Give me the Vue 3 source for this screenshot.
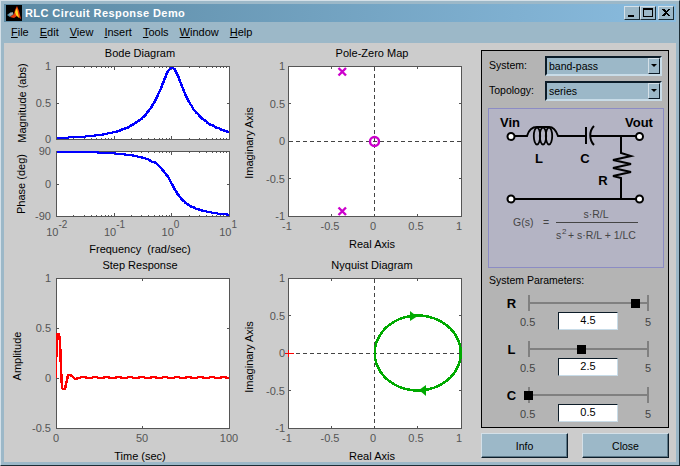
<script setup>
const FONT = 'Liberation Sans'
const freqLabel = 'Frequency  (rad/sec)'
const menus = [['F','ile'],['E','dit'],['V','iew'],['I','nsert'],['T','ools'],['W','indow'],['H','elp']]
const selects = [{ label: 'System:', value: 'band-pass' }, { label: 'Topology:', value: 'series' }]
const sliders = [
  { name: 'R', value: '4.5', pos: 88.4 },
  { name: 'L', value: '2.5', pos: 43.8 },
  { name: 'C', value: '0.5', pos: 0 }
]

const BX0 = 56.5, BX1 = 229.5
const logX = w => BX0 + (Math.log10(w) + 2) * (BX1 - BX0) / 3
const a = 0.9
function sample() {
  const out = []
  for (let i = 0; i <= 110; i++) out.push(Math.pow(10, -2 + 3 * i / 110))
  return out
}
const magLine = sample().map(w => {
  const m = a * w / Math.hypot(1 - w * w, a * w)
  return `${logX(w).toFixed(1)},${Math.round(138.5 - m * 71)}`
}).join(' ')
const phaseLine = sample().map(w => {
  const p = 90 - Math.atan2(a * w, 1 - w * w) * 180 / Math.PI
  return `${logX(w).toFixed(1)},${Math.round(184 - p * 32.5 / 90)}`
}).join(' ')

let stepPts = [[56,378],[56.5,340],[57.5,334],[59,334],[60,342],[61,368],[62,388],[63,389],[65,389],[68,375],[70,375],[73,377],[75,379],[79,378]]
for (let x = 80; x < 229; x += 11.7) {
  stepPts.push([x, 378], [x + 1.5, 377], [x + 5, 377], [x + 6.5, 378])
}
stepPts.push([229, 378])
const stepLine = stepPts.map(p => p.join(',')).join(' ')

const nyq = []
for (let i = 0; i <= 72; i++) {
  const t = i / 72 * 2 * Math.PI
  nyq.push(`${(417.75 + 43 * Math.cos(t)).toFixed(1)},${(353 + 37.5 * Math.sin(t)).toFixed(1)}`)
}
const nyqLine = nyq.join(' ')

const decades = [0, 1, 2, 3].map(i => BX0 + i * (BX1 - BX0) / 3)
const logTicks = []
for (let d = -2; d < 1; d++) {
  for (let k = 2; k < 10; k++) logTicks.push(logX(k * Math.pow(10, d)))
}
const decTicks = [decades[1], decades[2]]

const bxq = [-0.5, 0, 0.5].map(v => 374.5 + v * 86.5)
const pzX = [-1, -0.5, 0, 0.5, 1].map(v => ({ x: 375 + v * 86, t: String(v) }))
const pzY = [
  { t: '1', y: 66 }, { t: '0.5', y: 103.5 }, { t: '0', y: 141 }, { t: '-0.5', y: 178.5 }, { t: '-1', y: 216 }
]
const nyY = [
  { t: '1', y: 278 }, { t: '0.5', y: 315.5 }, { t: '0', y: 353 }, { t: '-0.5', y: 390.5 }, { t: '-1', y: 428 }
]
const stY = [
  { t: '1', y: 278 }, { t: '0.5', y: 328 }, { t: '0', y: 378 }, { t: '-0.5', y: 428 }
]
</script>

<template>
  <div class="window">
    <div class="title">
      <svg class="logo" width="16" height="16" viewBox="0 0 16 16">
        <rect width="16" height="16" fill="#000" />
        <path d="M1 10 L5 7 L8 9 L4 12 Z" fill="#4f8fa8" />
        <path d="M4 12 L8 9 L9 5 L11 1 L13 6 L15 14 L11 11 L8 13 Z" fill="#e8380c" />
        <path d="M9 7 L11 3 L12 8 L13 13 L10 10 Z" fill="#ffd820" />
        <path d="M3 9 L7 7 L7 9 L4 11 Z" fill="#a8a8a8" />
      </svg>
      <span class="title-text">RLC Circuit Response Demo</span>
      <div class="win-btns">
        <button class="wb"><svg width="14" height="12"><rect x="3" y="8" width="6" height="2" fill="#000" /></svg></button>
        <button class="wb"><svg width="14" height="12"><path d="M2.5 1.5h9v8h-9z M2 2.5h10" fill="none" stroke="#000" shape-rendering="crispEdges" /></svg></button>
        <button class="wb close"><svg width="14" height="12"><path d="M3.5 2 L10 9 M4.5 2 L11 9 M10 2 L3.5 9 M11 2 L4.5 9" stroke="#000" fill="none" shape-rendering="crispEdges" /></svg></button>
      </div>
    </div>
    <div class="menu">
      <span v-for="m in menus" :key="m[0]" class="mi"><u>{{ m[0] }}</u>{{ m[1] }}</span>
    </div>
    <div class="main">
      <svg class="plots" width="466" height="419" viewBox="4 43 466 419" :font-family="FONT" font-size="11">
        <defs>
          <clipPath id="clip-mag"><rect x="57" y="66" width="172" height="73" /></clipPath>
          <clipPath id="clip-phase"><rect x="57" y="151" width="172" height="65" /></clipPath>
          <clipPath id="clip-step"><rect x="56" y="279" width="173" height="149" /></clipPath>
        </defs>
        <!-- titles and axis labels -->
        <g fill="#000" text-anchor="middle">
          <text x="140" y="57">Bode Diagram</text>
          <text class="pre" x="140" y="253">{{ freqLabel }}</text>
          <text x="140" y="269">Step Response</text>
          <text x="140" y="460">Time (sec)</text>
          <text x="372" y="57">Pole-Zero Map</text>
          <text x="372" y="248">Real Axis</text>
          <text x="372" y="269">Nyquist Diagram</text>
          <text x="372" y="460">Real Axis</text>
          <text transform="translate(26 103) rotate(-90)">Magnitude (abs)</text>
          <text transform="translate(25 184) rotate(-90)">Phase (deg)</text>
          <text transform="translate(21 356) rotate(-90)">Amplitude</text>
          <text transform="translate(253 143) rotate(-90)">Imaginary Axis</text>
          <text transform="translate(253 357) rotate(-90)">Imaginary Axis</text>
        </g>

        <!-- axes boxes -->
        <g fill="#fff" stroke="#555" shape-rendering="crispEdges">
          <rect x="56.5" y="66.5" width="173" height="73" />
          <rect x="56.5" y="151.5" width="173" height="65" />
          <rect x="56.5" y="278.5" width="173" height="150" />
          <rect x="288.5" y="66.5" width="173" height="150" />
          <rect x="288.5" y="278.5" width="173" height="150" />
        </g>

        <!-- ticks -->
        <g stroke="#555" shape-rendering="crispEdges">
          <template v-for="x in logTicks" :key="x">
            <path :d="`M${x} 139V138M${x} 67V68M${x} 216V215M${x} 152V153`" />
          </template>
          <template v-for="x in decTicks" :key="x">
            <path :d="`M${x} 139V136M${x} 67V70M${x} 216V213M${x} 152V155`" />
          </template>
          <path d="M57 103.5H59M229 103.5H227M57 184.5H59M229 184.5H227" />
          <path d="M57 328.5H59M229 328.5H227M57 378.5H59M229 378.5H227M142.5 279V281M142.5 428V426" />
          <template v-for="x in bxq" :key="x">
            <path :d="`M${x} 67V69M${x} 216V214M${x} 279V281M${x} 428V426`" />
          </template>
          <path d="M289 103.5H291M461 103.5H459M289 178.5H291M461 178.5H459M289 141.5H291M461 141.5H459" />
          <path d="M289 315.5H291M461 315.5H459M289 390.5H291M461 390.5H459M289 353.5H291M461 353.5H459" />
        </g>

        <!-- tick labels -->
        <g fill="#555">
          <g text-anchor="end">
            <text x="51" y="70">1</text>
            <text x="51" y="107">0.5</text>
            <text x="51" y="143">0</text>
            <text x="51" y="155">90</text>
            <text x="51" y="188">0</text>
            <text x="51" y="220">-90</text>
            <text v-for="t in stY" :key="t.t" x="51" :y="t.y + 4">{{ t.t }}</text>
            <text v-for="t in pzY" :key="t.t" x="285" :y="t.y + 4">{{ t.t }}</text>
            <text v-for="t in nyY" :key="t.t" x="285" :y="t.y + 4">{{ t.t }}</text>
          </g>
          <g text-anchor="end">
            <text v-for="x in decades" :key="x" :x="x + 2" y="236">10</text>
          </g>
          <text v-for="(x, i) in decades" :key="x" :x="x + 2" y="228" font-size="10">{{ i - 2 }}</text>
          <g text-anchor="middle">
            <text x="56" y="442">0</text>
            <text x="142" y="442">50</text>
            <text x="229" y="442">100</text>
            <text v-for="p in pzX" :key="p.t" :x="p.x - 2" y="230">{{ p.t }}</text>
            <text v-for="p in pzX" :key="p.t" :x="p.x - 2" y="442">{{ p.t }}</text>
          </g>
        </g>

        <!-- dashed zero lines -->
        <g stroke="#444" stroke-dasharray="4 3" shape-rendering="crispEdges">
          <path d="M374.5 67V216M289 141.5H461" />
          <path d="M374.5 279V428M289 353.5H461" />
        </g>

        <!-- curves -->
        <g fill="none" shape-rendering="crispEdges" stroke-linejoin="round">
          <polyline :points="magLine" stroke="#0000ff" stroke-width="2.5" clip-path="url(#clip-mag)" />
          <polyline :points="phaseLine" stroke="#0000ff" stroke-width="2.5" clip-path="url(#clip-phase)" />
          <polyline :points="stepLine" stroke="#ff0000" stroke-width="2.5" clip-path="url(#clip-step)" />
          <polyline :points="nyqLine" stroke="#00aa00" stroke-width="2.5" />
          <path d="M285 353.5H294M288.5 350V357" stroke="#ff0000" />
        </g>
        <g fill="#00aa00">
          <path d="M410 311 L417 316.5 L410 321 Z" />
          <path d="M426 385 L419 390 L426 396 Z" />
        </g>
        <g fill="none" stroke="#cc00cc" stroke-width="2.4">
          <path d="M338.5 68 L346 75.5 M346 68 L338.5 75.5" />
          <path d="M338.5 207.5 L346 215 M346 207.5 L338.5 215" />
          <circle cx="374.5" cy="141.5" r="4.5" />
        </g>
      </svg>

      <div class="side">
        <div class="panel">
          <div v-for="s in selects" :key="s.label" class="sel-row">
            <span class="sel-label">{{ s.label }}</span>
            <div class="select">
              <span class="sel-val">{{ s.value }}</span>
              <span class="arrow"><i></i></span>
            </div>
          </div>

          <svg class="circuit" width="176" height="160" viewBox="488 108 176 160" :font-family="FONT">
            <rect x="488.5" y="108.5" width="175" height="159" fill="#b4b4c4" stroke="#8c8cc4" />
            <g fill="none" stroke="#000" stroke-width="2">
              <path d="M514 136H527C529 129 533 127 537 127H549C553 127 556 130 558 136H586" />
              <ellipse cx="537" cy="136" rx="3.2" ry="8.5" stroke-width="1.8" />
              <ellipse cx="543" cy="136" rx="3.2" ry="8.5" stroke-width="1.8" />
              <ellipse cx="549" cy="136" rx="3.2" ry="8.5" stroke-width="1.8" />
              <path d="M586 127V144" />
              <path d="M594 126C589 131 589 140 594 145" />
              <path d="M591 136H637M621 136V153L631 156L613 160L631 164L613 168L631 172L613 176L621 178V199M514 199H637" />
              <circle cx="511" cy="136.5" r="3.5" fill="#fff" />
              <circle cx="639.5" cy="136.5" r="3.5" fill="#fff" />
              <circle cx="511" cy="199" r="3.5" fill="#fff" />
              <circle cx="639.5" cy="199" r="3.5" fill="#fff" />
            </g>
            <g font-weight="700" font-size="13" text-anchor="middle" fill="#000">
              <text x="510" y="127">Vin</text>
              <text x="639" y="127">Vout</text>
              <text x="539" y="163">L</text>
              <text x="585" y="163">C</text>
              <text x="603" y="185">R</text>
            </g>
            <g font-size="10.5" fill="#444">
              <text x="513" y="226">G(s)</text>
              <text x="543" y="226">=</text>
              <text x="596" y="218" text-anchor="middle">s·R/L</text>
              <text x="556" y="239">s</text>
              <text x="562" y="234" font-size="8">2</text>
              <text x="568" y="239">+ s·R/L + 1/LC</text>
            </g>
            <path d="M556 222.5H638" stroke="#444" shape-rendering="crispEdges" />
          </svg>

          <div class="params-title">System Parameters:</div>

          <div v-for="s in sliders" :key="s.name" class="param">
            <div class="p-top">
              <b class="p-name">{{ s.name }}</b>
              <div class="track">
                <i class="thumb" :style="{ left: s.pos + '%' }"></i>
              </div>
            </div>
            <div class="p-bot">
              <span class="p-min">0.5</span>
              <div class="input">{{ s.value }}</div>
              <span class="p-max">5</span>
            </div>
          </div>
        </div>

        <div class="actions">
          <button class="act">Info</button>
          <button class="act">Close</button>
        </div>
      </div>
    </div>
  </div>
</template>

<style scoped>
.pre { white-space: pre; }
.window {
  width: 680px;
  height: 466px;
  box-sizing: border-box;
  background: #9cb8c8;
  border: 1px solid;
  border-color: #d4e0e8 #1c2c34 #1c2c34 #d4e0e8;
  padding: 3px;
  display: flex;
  flex-direction: column;
  font-family: "Liberation Sans", Arial, sans-serif;
  font-size: 11px;
  color: #000;
  overflow: hidden;
}
.title {
  height: 18px;
  flex: none;
  display: flex;
  align-items: center;
  padding: 0 2px;
  background: linear-gradient(90deg, #5c8aa4, #8abcdf);
  color: #fff;
}
.logo { flex: none; margin-right: 3px; }
.title-text { font-weight: 700; font-size: 11px; letter-spacing: 0.42px; white-space: nowrap; }
.win-btns { margin-left: auto; display: flex; }
.wb {
  width: 16px;
  height: 14px;
  padding: 0;
  box-sizing: border-box;
  background: #9cb8c8;
  border: 1px solid;
  border-color: #d4e0e8 #1c2c34 #1c2c34 #d4e0e8;
  display: flex;
  align-items: center;
  justify-content: center;
}
.wb.close { margin-left: 2px; }
.menu {
  height: 21px;
  flex: none;
  display: flex;
  align-items: center;
  gap: 11px;
  padding-left: 7px;
  box-sizing: border-box;
  padding-bottom: 1px;
}
.mi { white-space: nowrap; }
.main {
  flex: 1;
  min-height: 0;
  display: flex;
  background: #cccccc;
}
.plots { display: block; flex: none; }
.side {
  flex: none;
  width: 188px;
  margin-left: 11px;
  padding-top: 7px;
  display: flex;
  flex-direction: column;
}
.panel {
  height: 378px;
  box-sizing: border-box;
  background: #b4b4b4;
  border: 1px solid #000;
  padding: 2px 4px 0 6px;
  display: flex;
  flex-direction: column;
  font-size: 10.5px;
}
.sel-row {
  display: flex;
  align-items: center;
  height: 25px;
  flex: none;
}
.sel-label { width: 57px; flex: none; padding-left: 1px; padding-bottom: 1px; box-sizing: border-box; }
.select {
  width: 117px;
  height: 20px;
  box-sizing: border-box;
  background: #9cb8c8;
  border: 2px solid;
  border-color: #0c1c28 #c8dce8 #c8dce8 #0c1c28;
  display: flex;
  align-items: center;
  padding-left: 2px;
  position: relative;
}
.arrow {
  position: absolute;
  right: 0;
  top: 0;
  bottom: 0;
  width: 12px;
  background: #9cb8c8;
  box-sizing: border-box;
  border: 1px solid;
  border-color: #d4e0e8 #0c1c28 #0c1c28 #d4e0e8;
  display: flex;
  align-items: center;
  justify-content: center;
}
.arrow i {
  width: 0;
  height: 0;
  border-left: 3px solid transparent;
  border-right: 3px solid transparent;
  border-top: 3px solid #000;
}
.circuit { display: block; flex: none; margin-top: 5px; }
.params-title { flex: none; height: 17px; margin-top: 4px; margin-bottom: 5px; padding-left: 1px; line-height: 17px; color: #000; }
.param { flex: none; height: 46px; position: relative; }
.p-top { height: 18px; display: flex; align-items: center; }
.p-name { width: 40px; flex: none; font-size: 13px; text-align: center; box-sizing: border-box; padding-left: 7px; }
.track {
  width: 121px;
  height: 2px;
  background: #808080;
  position: relative;
}
.track::before, .track::after {
  content: "";
  position: absolute;
  top: -7px;
  width: 2px;
  height: 16px;
  background: #808080;
}
.track::before { left: 0; }
.track::after { right: 0; }
.thumb {
  position: absolute;
  top: -3px;
  width: 9px;
  height: 9px;
  margin-left: -4px;
  background: #000;
}
.p-bot { display: flex; align-items: center; height: 18px; }
.p-min { width: 70px; flex: none; padding-left: 32px; padding-top: 2px; box-sizing: border-box; color: #444; font-size: 11px; }
.input {
  width: 60px;
  height: 18px;
  box-sizing: border-box;
  background: #fff;
  border: 1px solid;
  border-color: #0c1c28 #c8dce8 #c8dce8 #0c1c28;
  text-align: center;
  line-height: 15px;
  flex: none;
  font-size: 11px;
}
.p-max { margin-left: 27px; padding-top: 2px; color: #444; font-size: 11px; }
.actions {
  display: flex;
  justify-content: space-between;
  margin-top: 5px;
}
.act {
  width: 87px;
  height: 25px;
  box-sizing: border-box;
  background: #9cb8c8;
  border: 1px solid;
  border-color: #d4e0e8 #0c1c28 #0c1c28 #d4e0e8;
  box-shadow: inset -1px -1px 0 #5c7888;
  font: 10.5px "Liberation Sans", Arial, sans-serif;
  color: #000;
  padding: 0;
}
</style>
<style>
html, body { margin: 0; padding: 0; background: #9cb8c8; }
</style>
